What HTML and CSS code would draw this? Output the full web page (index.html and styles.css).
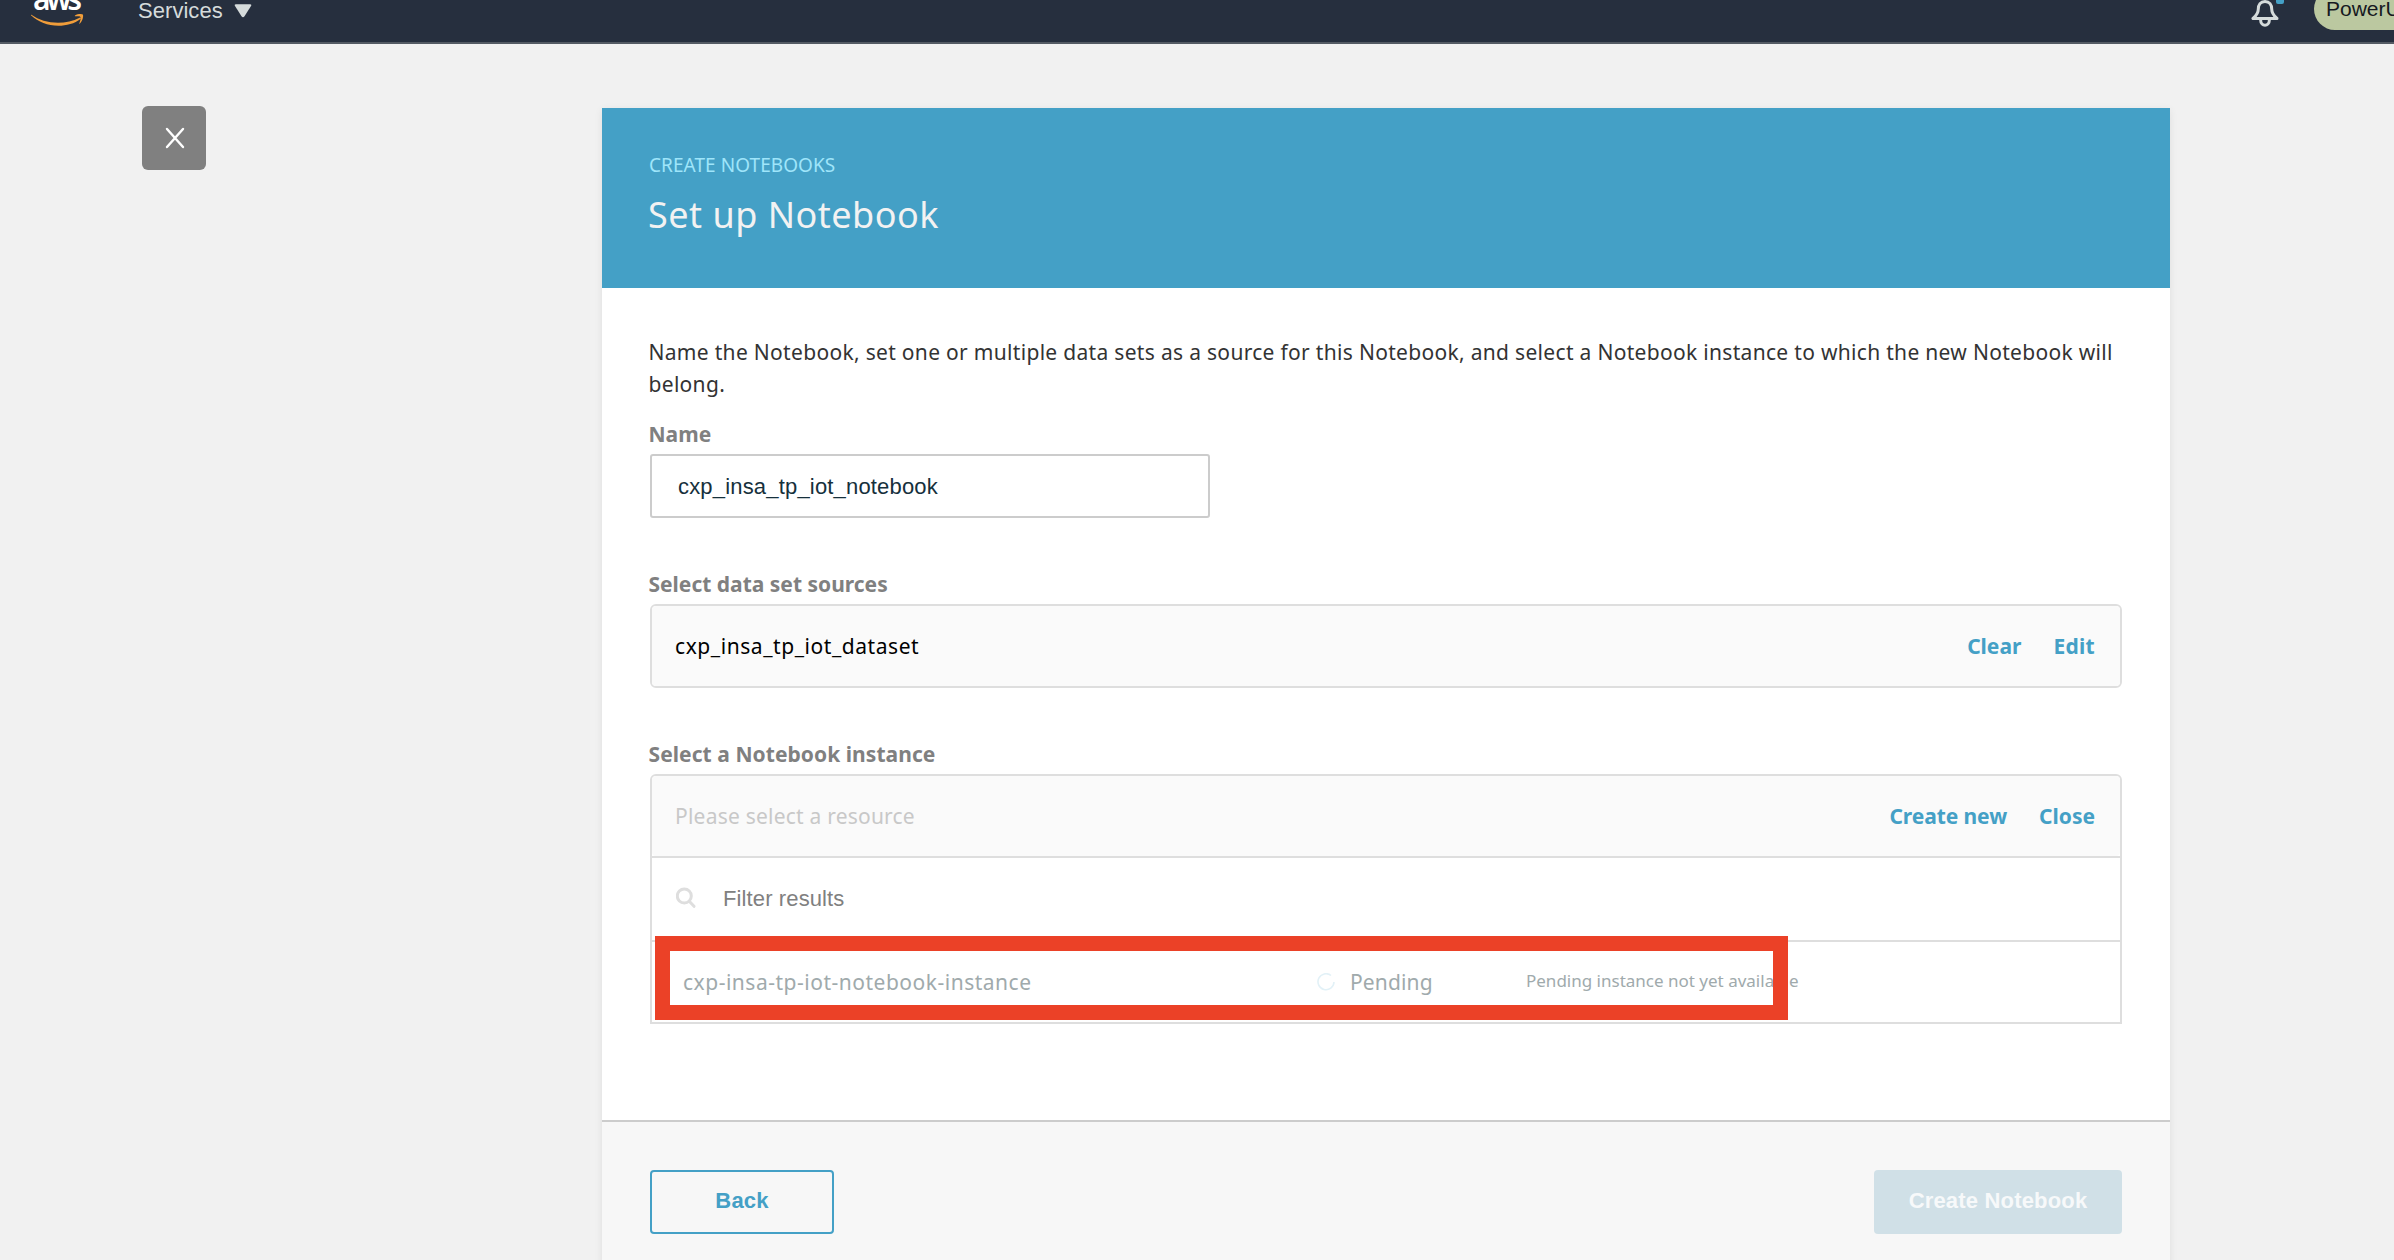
FILE: index.html
```html
<!DOCTYPE html>
<html lang="en">
<head>
<meta charset="utf-8">
<title>Set up Notebook</title>
<link rel="stylesheet" href="styles.css">
</head>
<body>
<header class="nav">
  <svg class="nav-logo" viewBox="0 0 56 44" width="56" height="44">
    <text x="3" y="10" textLength="49" class="logo-text">aws</text>
    <path class="logo-smile" transform="translate(1 0)" d="M.4 14.8C7.600 20 17 22.800 27 22.800C34.500 22.800 42.300 20.900 48.600 17.700C49.600 17.200 50.400 18.300 49.500 19C43.700 23.500 35.300 25.800 27.400 25.800C16.700 25.800 7.200 21.900.2 15.500C-.2 15 .100 14.600.4 14.800Z"/>
    <path class="logo-smile" transform="translate(1 0)" d="M44 15.500C46.500 13.700 50.800 13.600 51.800 14.500C52.800 15.700 51.500 21.300 48.900 23.600C48.500 24 48.100 23.800 48.300 23.300C49 21.500 50.200 17.900 49.400 16.900C48.600 15.900 45.800 16.200 44.300 16.300C43.800 16.300 43.700 15.800 44 15.500Z"/>
  </svg>
  <a class="nav-services">Services
    <svg viewBox="0 0 18 14" width="18" height="14"><path d="M2 .3H16Q18 .3 17 2L10.500 12.200Q9 14.200 7.500 12.200L1 2Q0 .3 2 .3Z"/></svg>
  </a>
  <div class="nav-bell">
    <svg viewBox="0 0 28 28" width="28" height="28">
      <path d="M14 2.500C9.500 2.500 7.300 6 7.300 10C7.300 14.500 5.500 16.500 2 19.500H26C22.500 16.500 20.700 14.500 20.700 10C20.700 6 18.500 2.500 14 2.500Z"/>
      <path d="M9.700 20V21.500C9.700 27.700 18.300 27.700 18.300 21.500V20"/>
    </svg>
    <span class="bell-badge"></span>
  </div>
  <div class="nav-user">PowerUser</div>
</header>

<main class="stage">
  <button class="close" aria-label="Close">
    <svg viewBox="0 0 20 22" width="20" height="22"><path d="M2 2L18 20M18 2L2 20"/></svg>
  </button>

  <section class="panel">
    <div class="panel-head">
      <div class="eyebrow">CREATE NOTEBOOKS</div>
      <h1 class="title">Set up Notebook</h1>
    </div>

    <div class="panel-body">
      <p class="intro">Name the Notebook, set one or multiple data sets as a source for this Notebook, and select a Notebook instance to which the new Notebook will<br>belong.</p>

      <label class="label label-name">Name</label>
      <div class="input">cxp_insa_tp_iot_notebook</div>

      <div class="label">Select data set sources</div>
      <div class="picker">
        <div class="picker-head">
          <span class="value">cxp_insa_tp_iot_dataset</span>
          <a class="link">Clear</a>
          <a class="link link-edit">Edit</a>
        </div>
      </div>

      <div class="label label-inst">Select a Notebook instance</div>
      <div class="picker picker-open">
        <div class="picker-head">
          <span class="value placeholder">Please select a resource</span>
          <a class="link link-new">Create new</a>
          <a class="link">Close</a>
        </div>
        <div class="filter">
          <svg viewBox="0 0 20 21" width="20" height="21"><circle cx="8.300" cy="9" r="7"/><path d="M13.500 14.500L18 19.300"/></svg>
          <span>Filter results</span>
        </div>
        <div class="row">
          <span class="row-name">cxp-insa-tp-iot-notebook-instance</span>
          <svg class="spinner" viewBox="0 0 18 18" width="18" height="18"><path d="M14 2.500A8 8 0 1 0 17 9"/></svg>
          <span class="row-status">Pending</span>
          <span class="row-note">Pending instance not yet available</span>
          <span class="highlight"></span>
        </div>
      </div>
    </div>

    <footer class="panel-foot">
      <button class="btn btn-back">Back</button>
      <button class="btn btn-create" disabled>Create Notebook</button>
    </footer>
  </section>
</main>
</body>
</html>
```

FILE: styles.css
```css
* { box-sizing: border-box; }

body {
  margin: 0;
  height: 1260px;
  overflow: hidden;
  background: #f1f1f1;
  font-family: "Noto Sans", sans-serif;
  font-size: 21px;
  color: #333;
}

button { margin: 0; padding: 0; border: 0; font: inherit; }

/* Navigation bar */
.nav {
  display: flex;
  height: 44px;
  padding-left: 30px;
  overflow: hidden;
  background: #262f3e;
  border-bottom: 2px solid #545b64;
  font-family: "Liberation Sans", sans-serif;
  font-size: 22px;
}
.nav-logo { flex: none; }
.logo-text {
  font: 600 30px "Noto Sans", sans-serif;
  fill: #fff;
}
.logo-smile { fill: #f09d3a; }
.nav-services {
  display: flex;
  align-items: flex-start;
  gap: 11px;
  margin-left: 52px;
  color: #d5dbdb;
  letter-spacing: .05px;
  line-height: 22px;
}
.nav-services svg { margin-top: 4px; fill: #d5dbdb; }
.nav-bell {
  position: relative;
  width: 28px;
  margin: -1px 35px 0 auto;
}
.nav-bell svg {
  fill: none;
  stroke: #d5dbdb;
  stroke-width: 3;
  stroke-linejoin: round;
}
.bell-badge {
  position: absolute;
  left: 25px;
  top: -3px;
  width: 8px;
  height: 8px;
  border-radius: 2px;
  background: #44a0c6;
}
.nav-user {
  width: 80px;
  height: 42px;
  margin-top: -12px;
  padding-left: 12px;
  border-radius: 21px 0 0 21px;
  overflow: hidden;
  background: #bbc8a0;
  color: #16191f;
  font-size: 21px;
  line-height: 41px;
}

/* Workspace */
.stage {
  display: flex;
  align-items: flex-start;
  height: 1216px;
  padding: 62px 224px 0 142px;
}
.close {
  display: flex;
  align-items: center;
  justify-content: center;
  width: 64px;
  height: 64px;
  margin-right: 396px;
  padding-left: 2px;
  border-radius: 6px;
  background: #808080;
}
.close svg {
  fill: none;
  stroke: #fff;
  stroke-width: 2.4;
  stroke-linecap: round;
}

/* Wizard panel */
.panel {
  width: 1568px;
  margin-top: 2px;
  background: #fff;
  box-shadow: 0 2px 8px rgba(0, 0, 0, .08);
}
.panel-head {
  height: 180px;
  padding: 45px 47px 0;
  background: #44a0c6;
}
.eyebrow {
  color: #9fe5fa;
  font-size: 19px;
  letter-spacing: .06px;
  line-height: 24px;
}
.title {
  margin: 14px 0 0 -1px;
  color: #f2f2f2;
  font-size: 36px;
  font-weight: 400;
  letter-spacing: .5px;
  line-height: 48px;
}
.panel-body {
  height: 832px;
  padding: 48px 48px 0;
}
.intro {
  margin: 0 0 0 -1.5px;
  letter-spacing: .31px;
  line-height: 32px;
  white-space: nowrap;
}
.label {
  display: block;
  margin: 52px 0 6px -1.5px;
  color: #808080;
  font-weight: 700;
  line-height: 28px;
}
.label-name { margin-top: 20px; }
.label-inst { letter-spacing: .06px; }
.input {
  width: 560px;
  height: 64px;
  padding-left: 26px;
  border: 2px solid #ccc;
  border-radius: 3px;
  color: #16303c;
  font: 22px/62px "Liberation Sans", sans-serif;
  letter-spacing: .18px;
}

/* Resource pickers */
.picker {
  border: 2px solid #dedede;
  border-radius: 6px;
}
.picker-open { border-radius: 6px 6px 0 0; }
.picker-head {
  display: flex;
  height: 80px;
  padding: 0 25px 0 23px;
  border-radius: 4px;
  background: #fafafa;
  color: #000;
  line-height: 80px;
}
.value { margin-right: auto; letter-spacing: .56px; }
.placeholder { color: #c8c8c8; letter-spacing: .22px; }
.link {
  margin-left: 32px;
  color: #44a0c6;
  font-weight: 700;
}
.link-edit { letter-spacing: .3px; }
.link-new { letter-spacing: -.08px; }
.filter {
  display: flex;
  align-items: center;
  height: 86px;
  padding-left: 24px;
  gap: 27px;
  border: solid #dedede;
  border-width: 2px 0;
  color: #808080;
  font: 22px "Liberation Sans", sans-serif;
  letter-spacing: .12px;
}
.filter svg {
  margin-top: -4px;
  fill: none;
  stroke: #dedede;
  stroke-width: 3;
  stroke-linecap: round;
}
.row {
  position: relative;
  display: flex;
  align-items: center;
  height: 80px;
  padding-left: 31px;
  color: #a0aaac;
}
.row-name { width: 634px; letter-spacing: .51px; }
.row-status { width: 176px; margin-left: 15px; letter-spacing: .15px; }
.row-note { padding-bottom: 4px; font-size: 17px; }
.spinner { fill: none; stroke: #e2f1f7; stroke-width: 1.6; }
.highlight {
  position: absolute;
  left: 3px;
  top: -6px;
  width: 1133px;
  height: 84px;
  border: 15px solid #eb4127;
}

/* Footer actions */
.panel-foot {
  display: flex;
  justify-content: space-between;
  height: 200px;
  padding: 48px 48px 0;
  border-top: 2px solid #ccc;
  background: #f7f7f7;
}
.btn {
  height: 64px;
  padding-bottom: 3px;
  border-radius: 4px;
  font: 700 22px "Liberation Sans", sans-serif;
  letter-spacing: .18px;
}
.btn-back {
  width: 184px;
  border: 2px solid #44a0c6;
  background: #f7f7f7;
  color: #44a0c6;
}
.btn-create {
  width: 248px;
  background: #d0e0e7;
  color: #f7f9fa;
}
```
